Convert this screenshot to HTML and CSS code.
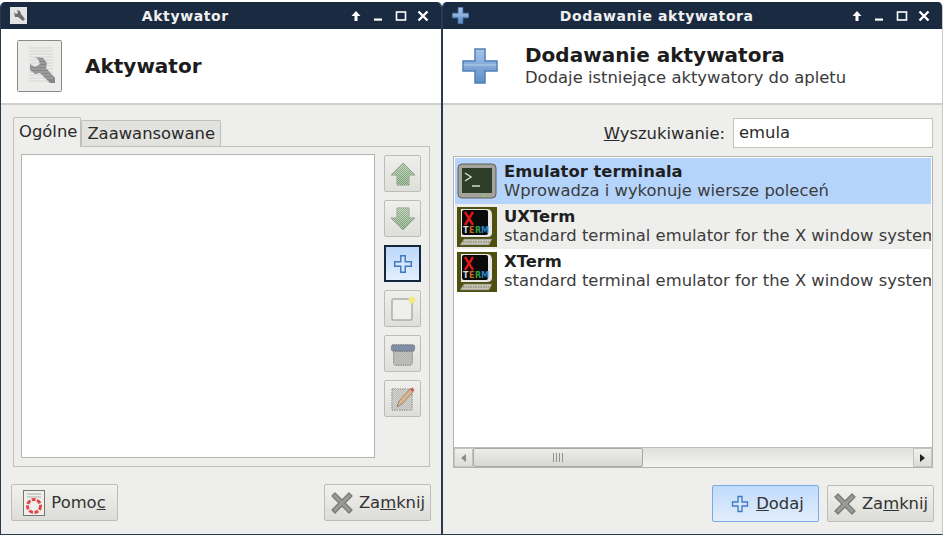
FILE: index.html
```html
<!DOCTYPE html>
<html lang="pl">
<head>
<meta charset="utf-8">
<title>Aktywator</title>
<link rel="stylesheet" href="styles.css">
</head>
<body>
<svg class="defs" width="0" height="0">
  <defs>
    <linearGradient id="pl" x1="0" y1="0" x2="0" y2="1"><stop offset="0" stop-color="#a9c6e8"/><stop offset="1" stop-color="#5c8cc8"/></linearGradient>
    <linearGradient id="arrow" x1="0" y1="0" x2="0" y2="1"><stop offset="0" stop-color="#9dba96"/><stop offset="1" stop-color="#6f9a6c"/></linearGradient>
    <pattern id="stip" width="2" height="2" patternUnits="userSpaceOnUse"><rect width="1" height="1" fill="#e8e8e4" opacity=".55"/><rect x="1" y="1" width="1" height="1" fill="#e8e8e4" opacity=".55"/></pattern>
    <symbol id="plus" viewBox="0 0 36 36"><path d="M13 1h10v12h12v10H23v12H13V23H1V13h12z" fill="url(#pl)" stroke="#4f7fba" stroke-width="1.5"/><path d="M1.5 17h33" stroke="#cfe0f4" stroke-width="1" opacity=".7"/></symbol>
    <symbol id="plus-o" viewBox="0 0 18 18"><path d="M7 1.500h4v5.500h5.500v4H11v5.500H7V11H1.500V7H7z" fill="#d5e6fa" stroke="#3f78c0" stroke-width="1.300"/></symbol>
    <symbol id="xmark" viewBox="0 0 24 24"><path d="M5 2l7 7 7-7 3 3-7 7 7 7-3 3-7-7-7 7-3-3 7-7-7-7z" fill="#9a9a96" stroke="#777" stroke-width="1.200" stroke-linejoin="round"/></symbol>
    <symbol id="xterm" viewBox="0 0 40 40"><rect width="40" height="40" fill="#4f4f10"/><path d="M4 2h26q5 0 5 6v18q0 4-5 4H4z" fill="#e8e8e8"/><rect x="5" y="3" width="26" height="25" rx="2" fill="#0a0a0a"/><path d="M8 5l8 13M16 5L8 18" stroke="#e01818" stroke-width="2.400"/><text x="6" y="26" class="xt">T</text><text x="12" y="26" class="xt xt-e">E</text><text x="18" y="26" class="xt xt-r">R</text><text x="24" y="26" class="xt xt-m">M</text><path d="M3 38l4-6h28l-3 6z" fill="#c4c4b4" stroke="#77776a" stroke-width=".6"/><path d="M6 35h26" stroke="#77776a" stroke-dasharray="1.500 1"/></symbol>
  </defs>
</svg>

<div class="desktop">
  <section class="window window-left">
    <header class="titlebar">
      <svg class="wm-icon" viewBox="0 0 17 17"><rect width="17" height="17" fill="#e4e4e2"/><path d="M4 5l2 2 2-1-1-3 3 1 1 3 4 5-2 2-5-4-3 0z" fill="#6a6e70"/></svg>
      <span class="wm-title">Aktywator</span>
      <span class="wm-buttons">
        <svg viewBox="0 0 12 12"><path d="M6 1L1.500 6H4.500v5h3V6h3z" fill="#fff"/></svg>
        <svg viewBox="0 0 12 12"><rect x="2" y="8.500" width="8" height="2.200" fill="#fff"/></svg>
        <svg viewBox="0 0 12 12"><rect x="1.500" y="2" width="9" height="8" fill="none" stroke="#fff" stroke-width="1.600"/></svg>
        <svg viewBox="0 0 12 12"><path d="M1.500 1.500l9 9M10.500 1.500l-9 9" stroke="#fff" stroke-width="2.400"/></svg>
      </span>
    </header>
    <div class="head head-left">
      <svg class="head-icon" viewBox="0 0 46 52">
        <rect x=".5" y=".5" width="44" height="51" rx="1" fill="#ececea" stroke="#8a8a86"/>
        <path d="M13 24l5 3 5-3-2-5-3-2 8 1 4 5-1 5 9 10v5h-5L23 33l-5 1-5-4z" fill="#87888a"/>
        <path d="M12 8h24M12 11h24M12 14h24M12 17h24M12 20h24M12 23h24M12 26h24M12 29h24M12 32h24M12 35h24M12 38h24M12 41h20" stroke="#c6c6c4" stroke-width=".8" opacity=".75"/>
      </svg>
      <h1 class="head-title">Aktywator</h1>
    </div>
    <div class="body">
      <div class="tabs">
        <span class="tab tab-active">Ogólne</span>
        <span class="tab">Zaawansowane</span>
      </div>
      <div class="panel">
        <div class="listbox"></div>
        <div class="tools">
          <button class="tool"><svg viewBox="0 0 26 26"><path d="M13 2L25 14h-6v10H7V14H1z" fill="url(#arrow)" stroke="#87a07f"/><path d="M13 2L25 14h-6v10H7V14H1z" fill="url(#stip)"/></svg></button>
          <button class="tool"><svg viewBox="0 0 26 26"><path d="M13 24L25 12h-6V2H7v10H1z" fill="url(#arrow)" stroke="#87a07f"/><path d="M13 24L25 12h-6V2H7v10H1z" fill="url(#stip)"/></svg></button>
          <button class="tool tool-on"><svg viewBox="0 0 18 18"><use href="#plus-o"/></svg></button>
          <button class="tool"><svg viewBox="0 0 26 26"><rect x="2" y="3" width="20" height="21" rx="1" fill="#efefed" stroke="#8f8f8b"/><circle cx="22" cy="4" r="3.500" fill="#f3e98a"/></svg></button>
          <button class="tool"><svg viewBox="0 0 28 28"><rect x="4" y="8" width="20" height="18" rx="2" fill="#a8a8a6" stroke="#666" stroke-dasharray="1.500 1"/><rect x="4" y="8" width="20" height="18" fill="url(#stip)"/><rect x="1.500" y="4" width="25" height="7" rx="2" fill="#7e8ea6" stroke="#666" stroke-dasharray="1.500 1"/></svg></button>
          <button class="tool"><svg viewBox="0 0 26 26"><rect x="2" y="3" width="20" height="21" fill="#bcbcb8" stroke="#777" stroke-dasharray="1.500 1"/><rect x="2" y="3" width="20" height="21" fill="url(#stip)"/><path d="M7 21l2-6L20 3l3 3-11 12z" fill="#d8b58a" stroke="#8d7a66" stroke-width=".8"/><path d="M20 3l3 3 1.500-2-2-2.500z" fill="#d05c5c"/></svg></button>
        </div>
      </div>
      <div class="actions">
        <button class="btn btn-pomoc">
          <svg class="btn-help" viewBox="0 0 22 26"><rect x=".5" y=".5" width="21" height="25" fill="#efefed" stroke="#77776f"/><path d="M4 4h14M4 7h14" stroke="#aaa"/><circle cx="11" cy="16" r="6.500" fill="none" stroke="#e04848" stroke-width="3" stroke-dasharray="4 1.500"/></svg>
          <span>Pomo<u>c</u></span>
        </button>
        <button class="btn">
          <svg class="btn-x" viewBox="0 0 24 24"><use href="#xmark"/></svg>
          <span>Za<u>m</u>knij</span>
        </button>
      </div>
    </div>
  </section>

  <section class="window window-right">
    <header class="titlebar">
      <svg class="wm-icon" viewBox="0 0 36 36"><use href="#plus"/></svg>
      <span class="wm-title">Dodawanie aktywatora</span>
      <span class="wm-buttons">
        <svg viewBox="0 0 12 12"><path d="M6 1L1.500 6H4.500v5h3V6h3z" fill="#fff"/></svg>
        <svg viewBox="0 0 12 12"><rect x="2" y="8.500" width="8" height="2.200" fill="#fff"/></svg>
        <svg viewBox="0 0 12 12"><rect x="1.500" y="2" width="9" height="8" fill="none" stroke="#fff" stroke-width="1.600"/></svg>
        <svg viewBox="0 0 12 12"><path d="M1.500 1.500l9 9M10.500 1.500l-9 9" stroke="#fff" stroke-width="2.400"/></svg>
      </span>
    </header>
    <div class="head head-right">
      <svg class="head-plus" viewBox="0 0 36 36"><use href="#plus"/></svg>
      <div>
        <h1 class="head-title">Dodawanie aktywatora</h1>
        <p class="head-sub">Dodaje istniejące aktywatory do apletu</p>
      </div>
    </div>
    <div class="body body-right">
      <div class="search">
        <label class="search-label"><u>W</u>yszukiwanie:</label>
        <span class="search-input">emula</span>
      </div>
      <div class="results">
        <div class="rows">
          <div class="row row-sel">
            <svg class="row-icon" viewBox="0 0 40 40"><rect x="1" y="3" width="38" height="34" rx="4" fill="#a3a39b" stroke="#5f5f58"/><rect x="5" y="7" width="30" height="25" fill="#2d3d28"/><path d="M8 12l6 4-6 4" fill="none" stroke="#c8e0c0" stroke-width="1.500"/><path d="M15 25h8" stroke="#c8e0c0" stroke-width="1.500"/><rect x="26" y="33.500" width="3" height="2" fill="#7fd060"/></svg>
            <div class="row-text"><strong>Emulator terminala</strong><span>Wprowadza i wykonuje wiersze poleceń</span></div>
          </div>
          <div class="row row-alt">
            <svg class="row-icon" viewBox="0 0 40 40"><use href="#xterm"/></svg>
            <div class="row-text"><strong>UXTerm</strong><span>standard terminal emulator for the X window system</span></div>
          </div>
          <div class="row">
            <svg class="row-icon" viewBox="0 0 40 40"><use href="#xterm"/></svg>
            <div class="row-text"><strong>XTerm</strong><span>standard terminal emulator for the X window system</span></div>
          </div>
        </div>
        <div class="scrollbar">
          <span class="sb-btn"><i class="tri-left"></i></span>
          <span class="sb-track"><span class="sb-thumb"><i class="grip"></i></span></span>
          <span class="sb-btn"><i class="tri-right"></i></span>
        </div>
      </div>
      <div class="actions actions-right">
        <button class="btn btn-default">
          <svg class="btn-plus" viewBox="0 0 18 18"><use href="#plus-o"/></svg>
          <span><u>D</u>odaj</span>
        </button>
        <button class="btn">
          <svg class="btn-x" viewBox="0 0 24 24"><use href="#xmark"/></svg>
          <span>Za<u>m</u>knij</span>
        </button>
      </div>
    </div>
  </section>
</div>
</body>
</html>
```
FILE: styles.css
```css
* { box-sizing: border-box; }
html, body { margin: 0; padding: 0; }
body {
  width: 943px; height: 535px; overflow: hidden;
  background: #fff;
  font-family: "DejaVu Sans", sans-serif;
  font-size: 16.4px; color: #2a2a2a;
}
.defs { position: absolute; }
.xt { font: bold 8px "DejaVu Sans", sans-serif; fill: #d8d8d8; }
.xt-e { fill: #c06a20; }
.xt-r { fill: #30a040; }
.xt-m { fill: #3080c0; }

.desktop { display: flex; height: 535px; padding-top: 2px; }
.window { display: flex; flex-direction: column; background: #eeeeec; overflow: hidden; border-radius: 5px 5px 0 0; border: 1px solid #2a3a4e; border-top: 0; }
.window-left { width: 442px; }
.window-right { width: 501px; border-right-color: #c8c8c4; }

.titlebar { display: flex; align-items: center; height: 27px; flex: none; background: #1a2a40; color: #fff; padding: 0 12px 0 9px; }
.wm-icon { width: 17px; height: 17px; flex: none; }
.wm-title { flex: 1; text-align: center; font-weight: bold; font-size: 14px; padding: 0 11px 0 5px; color: #f0f0f0; letter-spacing: .6px; }
.wm-buttons { display: flex; gap: 10.500px; align-items: center; }
.wm-buttons svg { width: 12px; height: 12px; display: block; }

.head { height: 76px; flex: none; background: #fff; border-bottom: 2px solid #cfcfcb; display: flex; align-items: center; }
.head-left { padding-left: 16px; gap: 22px; }
.head-right { padding-left: 19px; gap: 27px; }
.head-icon { width: 46px; height: 52px; flex: none; }
.head-plus { width: 36px; height: 36px; flex: none; }
.head-title { margin: 0; font-size: 20px; font-weight: bold; color: #1c1c1c; line-height: 23px; }
.head-sub { margin: 0; font-size: 16.4px; line-height: 21px; color: #3a3a3a; }

.body { flex: 1; display: flex; flex-direction: column; padding: 13px 10px 0 12px; }
.tabs { display: flex; align-items: flex-end; height: 28px; }
.tab { height: 26px; padding: 0 5px; line-height: 26px; background: #e2e2df; border: 1px solid #c0c0bb; border-bottom: 0; border-radius: 2px 2px 0 0; }
.tab-active { height: 30px; padding-right: 3px; background: #eeeeec; line-height: 28px; position: relative; margin-bottom: -1px; z-index: 1; }
.panel { display: flex; gap: 9px; height: 321px; margin-right: 1px; padding: 7px 8px 8px 7px; border: 1px solid #c0c0bb; }
.listbox { width: 354px; background: #fff; border: 1px solid #b4b4af; }
.tools { display: flex; flex-direction: column; gap: 8px; padding-top: 1px; }
.tool { width: 37px; height: 37px; padding: 0; display: flex; align-items: center; justify-content: center; background: linear-gradient(#efefed, #dededa); border: 1px solid #bdbdb8; border-radius: 2px; }
.tool svg { width: 26px; height: 26px; display: block; }
.tool-on { background: linear-gradient(#bcd8fb, #e3effd); border: 2px solid #16263c; border-radius: 0; }
.tool-on svg { width: 20px; height: 20px; }

.actions { display: flex; justify-content: space-between; margin-top: 17px; margin-left: -2px; }
.actions-right { justify-content: flex-end; gap: 8px; margin-right: 0; }
.btn { width: 107px; height: 37px; display: flex; align-items: center; justify-content: center; gap: 5px; padding: 0; font: inherit; color: #333; background: linear-gradient(#f1f1ef, #dcdcd8); border: 1px solid #bdbdb8; border-radius: 2px; }
.btn-pomoc { gap: 6px; }
.btn-default { background: linear-gradient(#c0dbfc, #e2eefd); border-color: #7aa9e4; gap: 7px; padding-left: 4px; }
.btn-help { width: 22px; height: 26px; }
.btn-x { width: 24px; height: 24px; }
.btn-plus { width: 18px; height: 18px; }

.body-right { padding: 13px 8px 0 10px; }
.search { display: flex; justify-content: flex-end; align-items: center; gap: 8px; height: 30px; margin-right: 1px; }
.search-input { width: 200px; height: 30px; background: #fff; border: 1px solid #c4c4bf; line-height: 28px; padding-left: 5px; }
.results { margin-top: 8px; margin-right: 1px; height: 312px; border: 1px solid #b4b4af; background: #fff; display: flex; flex-direction: column; }
.rows { flex: 1; padding: 1px; overflow: hidden; min-height: 0; }
.row { display: flex; align-items: center; height: 45px; gap: 7px; padding-left: 2px; overflow: hidden; }
.row-sel { background: #b5d4fb; height: 46px; }
.row-alt { background: #eeeeec; }
.row-icon { width: 40px; height: 40px; flex: none; }
.row-text { display: flex; flex-direction: column; white-space: nowrap; line-height: 19px; min-width: 0; color: #3c3c3c; margin-top: -2px; }
.row-sel .row-text { margin-top: 0; }
.row-text strong { color: #1f1f1f; }

.scrollbar { display: flex; height: 20px; flex: none; background: linear-gradient(#dfdfdb, #f4f4f2); border-top: 1px solid #bdbdb8; }
.sb-btn { width: 19px; height: 19px; display: flex; align-items: center; justify-content: center; background: linear-gradient(#f0f0ee, #dcdcd8); border: 1px solid #c4c4bf; }
.sb-track { flex: 1; display: flex; }
.sb-thumb { width: 170px; display: flex; align-items: center; justify-content: center; background: linear-gradient(#ededeb, #d6d6d2); border: 1px solid #a8a8a3; border-radius: 2px; }
.grip { width: 11px; height: 9px; background: repeating-linear-gradient(90deg, #909090 0 1px, transparent 1px 3px); }
.tri-left, .tri-right { width: 0; height: 0; border-style: solid; border-width: 4px 0; border-color: transparent; }
.tri-left { border-right: 5px solid #8a8a86; }
.tri-right { border-left: 5px solid #222; }
```
